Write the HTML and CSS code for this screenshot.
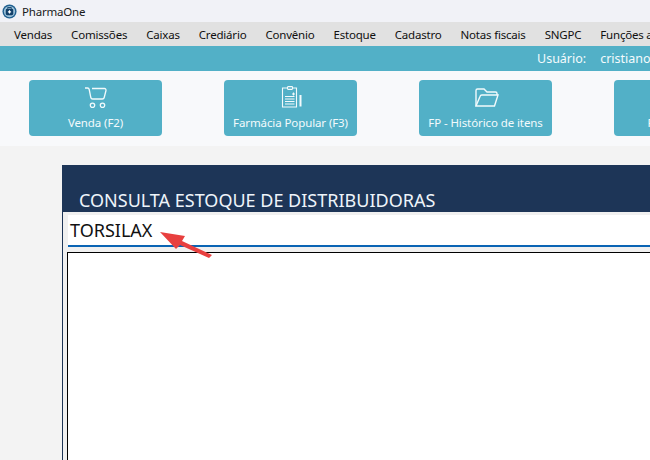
FILE: index.html
```html
<!DOCTYPE html>
<html lang="pt">
<head>
<meta charset="utf-8">
<title>PharmaOne</title>
<link rel="stylesheet" href="styles.css">
</head>
<body>
<div class="app">
  <header class="titlebar">
    <svg class="logo" width="15" height="15" viewBox="0 0 16 16"><circle cx="8" cy="8" r="7.500" fill="#1f5f8f"/><circle cx="8" cy="8" r="6" fill="#9fc3da"/><rect x="4" y="5" width="8" height="7" rx="1.500" fill="#12406a"/><path d="M6 5V3.800h4V5" fill="none" stroke="#12406a"/><path d="M8 6.700v3.400M6.300 8.400h3.400" stroke="#fff" stroke-width="1.200"/></svg>
    <span>PharmaOne</span>
  </header>
  <nav class="menu">
    <span>Vendas</span><span>Comissões</span><span>Caixas</span><span>Crediário</span><span>Convênio</span><span>Estoque</span><span>Cadastro</span><span>Notas fiscais</span><span>SNGPC</span><span>Funções auxiliares</span>
  </nav>
  <div class="userbar"><span class="user-label">Usuário:</span><span>cristiano</span></div>
  <div class="toolbar">
    <div class="tool">
      <svg class="tool-icon" width="25" height="22" viewBox="0 0 25 22" fill="none" stroke="#f2fafc" stroke-width="1.300"><path d="M2 2h2.500c1 0 1.500.5 1.700 1.500L7.800 11.500c.2 1 .8 1.500 1.800 1.500h9.700c1 0 1.700-.5 1.900-1.500L23 4.500c.2-1.200-.5-2-1.500-2H9"/><circle cx="9.500" cy="19.300" r="2.200"/><circle cx="19.500" cy="19.300" r="2.200"/></svg>
      <span>Venda (F2)</span>
    </div>
    <div class="tool">
      <svg class="tool-icon" width="22" height="22" viewBox="0 0 22 22" fill="none" stroke="#f2fafc" stroke-width="1.100"><path d="M7.500 2h-5v19h14V2h-4"/><rect x="7.500" y=".6" width="5" height="2.800" rx=".6"/><path d="M5 10.500h9.500M5 13h9.500M5 15.500h9.500M5 18h9.500M13.500 6.500v3M12 8h3"/><path d="M20.500 9v11.500" stroke-width="2"/></svg>
      <span>Farmácia Popular (F3)</span>
    </div>
    <div class="tool">
      <svg class="tool-icon" width="26" height="22" viewBox="0 0 26 22" fill="none" stroke="#f2fafc" stroke-width="1.400"><path d="M3 20V4.500c0-1 .5-1.500 1.500-1.500h6.500l3 3h8.500c1 0 1.500.5 1.500 1.500V9"/><path d="M3 20L7 10.500c.3-1 .8-1.500 1.800-1.500H25L21.500 20z"/></svg>
      <span>FP - Histórico de itens</span>
    </div>
    <div class="tool tool-last"><span>Fechamento</span></div>
  </div>
  <main class="workspace">
    <section class="panel">
      <h1 class="panel-title">CONSULTA ESTOQUE DE DISTRIBUIDORAS</h1>
      <div class="panel-body">
        <div class="search">TORSILAX</div>
        <div class="results"></div>
        <svg class="arrow" width="60" height="32" viewBox="0 0 60 32"><path d="M4 3l25 4-3 5 30 14-3 3-29-13-4 4z" fill="#e8403f"/></svg>
      </div>
    </section>
  </main>
</div>
</body>
</html>
```
FILE: styles.css
```css
* { box-sizing: border-box; }
html, body { margin: 0; height: 100%; overflow: hidden; }
body { font-family: "Noto Sans", "Open Sans", sans-serif; background: #f3f3f3; }
.app { width: 650px; height: 460px; display: flex; flex-direction: column; overflow: hidden; }
.titlebar { height: 22px; flex: none; background: #f1f2f7; display: flex; align-items: center; gap: 5px; padding-left: 2px; font-size: 11.500px; letter-spacing: -.2px; color: #1a1a1a; }
.menu { height: 24px; flex: none; background: #e1e1e1; display: flex; align-items: center; gap: 19px; padding-left: 14px; font-size: 11.500px; letter-spacing: -.2px; color: #101010; white-space: nowrap; }
.userbar { height: 25px; flex: none; background: #52b0c7; display: flex; align-items: center; padding-left: 537px; gap: 14px; font-size: 12.500px; color: #f4fbfd; white-space: nowrap; }
.toolbar { height: 75px; flex: none; background: #f8f9fb; display: flex; gap: 62px; padding: 9px 0 0 29px; }
.tool { width: 133px; height: 56px; flex: none; background: #52b0c7; border-radius: 4px; display: flex; flex-direction: column; align-items: center; padding-top: 6px; gap: 7px; color: #f2fafc; font-size: 11.500px; line-height: 16px; letter-spacing: -.1px; white-space: nowrap; }
.tool-icon { display: block; flex: none; }
.tool-last { justify-content: flex-end; padding-bottom: 5px; }
.workspace { flex: 1; padding: 19px 0 0 62px; overflow: hidden; }
.panel { width: 700px; height: 400px; background: #1d3557; padding: 0 0 0 1px; }
.panel-title { height: 47px; margin: 0; padding: 23px 0 0 16px; font-size: 18px; line-height: 24px; font-weight: 400; color: #eef4fa; white-space: nowrap; }
.panel-body { position: relative; height: 353px; background: #f0f0f0; padding: 3px 0 0 4px; }
.search { height: 32px; margin-left: 1px; background: #fff; border-bottom: 2px solid #0a64b4; padding-left: 2px; font-size: 18px; line-height: 30px; color: #111; }
.results { margin-top: 5px; height: 320px; background: #fff; border: 1px solid #000; }
.arrow { position: absolute; left: 93px; top: 17px; }
```
